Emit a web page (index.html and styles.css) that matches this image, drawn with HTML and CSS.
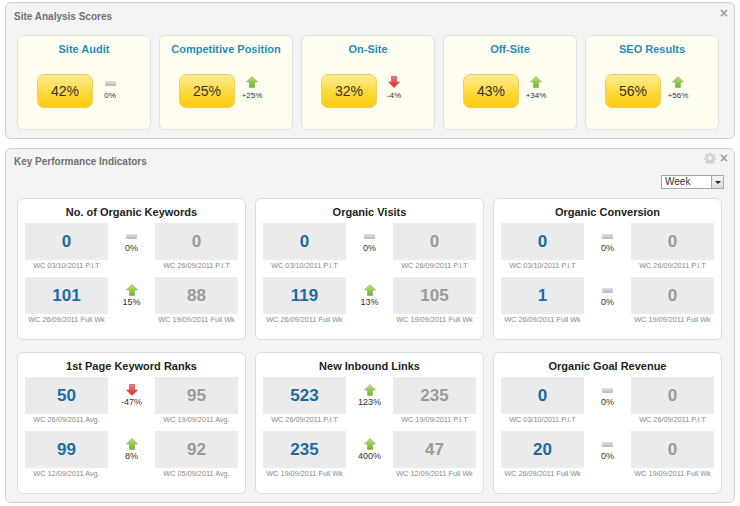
FILE: index.html
```html
<!DOCTYPE html>
<html>
<head>
    <title>Site Analysis Dashboard</title>
    <link rel="stylesheet" href="styles.css">
</head>
<body>
    <svg width="0" height="0" class="defs">
        <defs>
            <linearGradient id="gUp" x1="0" y1="0" x2="0" y2="1">
                <stop offset="0" stop-color="#b9e27a"/>
                <stop offset="1" stop-color="#6fb22c"/>
            </linearGradient>
            <linearGradient id="gDown" x1="0" y1="0" x2="0" y2="1">
                <stop offset="0" stop-color="#f47c7c"/>
                <stop offset="1" stop-color="#d9262b"/>
            </linearGradient>
            <symbol id="up" viewBox="0 0 12 12">
                <path d="M6 0.5 L11.5 6 H8.5 V11.5 H3.5 V6 H0.5 Z" fill="url(#gUp)" stroke="#7cb342" stroke-width="0.6"/>
            </symbol>
            <symbol id="down" viewBox="0 0 12 12">
                <path d="M6 11.5 L11.5 6 H8.5 V0.5 H3.5 V6 H0.5 Z" fill="url(#gDown)" stroke="#d33" stroke-width="0.6"/>
            </symbol>
        </defs>
    </svg>

    <div class="panel">
        <div class="panel-head">
            <span class="panel-title">Site Analysis Scores</span>
            <span class="tools"><span class="close">&#215;</span></span>
        </div>
        <div class="scores">
            <div class="score-card">
                <h3>Site Audit</h3>
                <div class="score-row">
                    <div class="badge">42%</div>
                    <div class="change"><span class="flat"></span><span>0%</span></div>
                </div>
            </div>
            <div class="score-card">
                <h3>Competitive Position</h3>
                <div class="score-row">
                    <div class="badge">25%</div>
                    <div class="change"><svg class="arrow"><use href="#up"/></svg><span>+25%</span></div>
                </div>
            </div>
            <div class="score-card">
                <h3>On-Site</h3>
                <div class="score-row">
                    <div class="badge">32%</div>
                    <div class="change"><svg class="arrow"><use href="#down"/></svg><span>-4%</span></div>
                </div>
            </div>
            <div class="score-card">
                <h3>Off-Site</h3>
                <div class="score-row">
                    <div class="badge">43%</div>
                    <div class="change"><svg class="arrow"><use href="#up"/></svg><span>+34%</span></div>
                </div>
            </div>
            <div class="score-card">
                <h3>SEO Results</h3>
                <div class="score-row">
                    <div class="badge">56%</div>
                    <div class="change"><svg class="arrow"><use href="#up"/></svg><span>+56%</span></div>
                </div>
            </div>
        </div>
    </div>

    <div class="panel kpi-panel">
        <div class="panel-head kpi-head">
            <span class="panel-title">Key Performance Indicators</span>
            <span class="tools">
                <svg class="gear" viewBox="0 0 12 12">
                    <path d="M5 0.5h2l0.3 1.5 1.1 0.5 1.3-0.9 1.4 1.4-0.9 1.3 0.5 1.1 1.5 0.3v2l-1.5 0.3-0.5 1.1 0.9 1.3-1.4 1.4-1.3-0.9-1.1 0.5-0.3 1.5h-2l-0.3-1.5-1.1-0.5-1.3 0.9-1.4-1.4 0.9-1.3-0.5-1.1-1.5-0.3v-2l1.5-0.3 0.5-1.1-0.9-1.3 1.4-1.4 1.3 0.9 1.1-0.5z M6 4a2 2 0 1 0 0.01 0z" fill="#d4d4d4" fill-rule="evenodd"/>
                </svg>
                <span class="close">&#215;</span>
            </span>
        </div>
        <div class="kpi-toolbar">
            <div class="select"><span>Week</span><span class="select-btn"><i></i></span></div>
        </div>
        <div class="kpis">
            <div class="kpi-card">
                <h3>No. of Organic Keywords</h3>
                <div class="kpi-grid">
                    <div class="cell"><div class="val">0</div><div class="lbl">WC 03/10/2011 P.I.T</div></div>
                    <div class="change"><span class="flat"></span><span>0%</span></div>
                    <div class="cell"><div class="val old">0</div><div class="lbl">WC 26/09/2011 P.I.T</div></div>
                    <div class="cell"><div class="val">101</div><div class="lbl">WC 26/09/2011 Full Wk</div></div>
                    <div class="change"><svg class="arrow"><use href="#up"/></svg><span>15%</span></div>
                    <div class="cell"><div class="val old">88</div><div class="lbl">WC 19/09/2011 Full Wk</div></div>
                </div>
            </div>
            <div class="kpi-card">
                <h3>Organic Visits</h3>
                <div class="kpi-grid">
                    <div class="cell"><div class="val">0</div><div class="lbl">WC 03/10/2011 P.I.T</div></div>
                    <div class="change"><span class="flat"></span><span>0%</span></div>
                    <div class="cell"><div class="val old">0</div><div class="lbl">WC 26/09/2011 P.I.T</div></div>
                    <div class="cell"><div class="val">119</div><div class="lbl">WC 26/09/2011 Full Wk</div></div>
                    <div class="change"><svg class="arrow"><use href="#up"/></svg><span>13%</span></div>
                    <div class="cell"><div class="val old">105</div><div class="lbl">WC 19/09/2011 Full Wk</div></div>
                </div>
            </div>
            <div class="kpi-card">
                <h3>Organic Conversion</h3>
                <div class="kpi-grid">
                    <div class="cell"><div class="val">0</div><div class="lbl">WC 03/10/2011 P.I.T</div></div>
                    <div class="change"><span class="flat"></span><span>0%</span></div>
                    <div class="cell"><div class="val old">0</div><div class="lbl">WC 26/09/2011 P.I.T</div></div>
                    <div class="cell"><div class="val">1</div><div class="lbl">WC 26/09/2011 Full Wk</div></div>
                    <div class="change"><span class="flat"></span><span>0%</span></div>
                    <div class="cell"><div class="val old">0</div><div class="lbl">WC 19/09/2011 Full Wk</div></div>
                </div>
            </div>
            <div class="kpi-card">
                <h3>1st Page Keyword Ranks</h3>
                <div class="kpi-grid">
                    <div class="cell"><div class="val">50</div><div class="lbl">WC 26/09/2011 Avg.</div></div>
                    <div class="change"><svg class="arrow"><use href="#down"/></svg><span>-47%</span></div>
                    <div class="cell"><div class="val old">95</div><div class="lbl">WC 19/09/2011 Avg.</div></div>
                    <div class="cell"><div class="val">99</div><div class="lbl">WC 12/09/2011 Avg.</div></div>
                    <div class="change"><svg class="arrow"><use href="#up"/></svg><span>8%</span></div>
                    <div class="cell"><div class="val old">92</div><div class="lbl">WC 05/09/2011 Avg.</div></div>
                </div>
            </div>
            <div class="kpi-card">
                <h3>New Inbound Links</h3>
                <div class="kpi-grid">
                    <div class="cell"><div class="val">523</div><div class="lbl">WC 26/09/2011 P.I.T</div></div>
                    <div class="change"><svg class="arrow"><use href="#up"/></svg><span>123%</span></div>
                    <div class="cell"><div class="val old">235</div><div class="lbl">WC 19/09/2011 P.I.T</div></div>
                    <div class="cell"><div class="val">235</div><div class="lbl">WC 19/09/2011 Full Wk</div></div>
                    <div class="change"><svg class="arrow"><use href="#up"/></svg><span>400%</span></div>
                    <div class="cell"><div class="val old">47</div><div class="lbl">WC 12/09/2011 Full Wk</div></div>
                </div>
            </div>
            <div class="kpi-card">
                <h3>Organic Goal Revenue</h3>
                <div class="kpi-grid">
                    <div class="cell"><div class="val">0</div><div class="lbl">WC 03/10/2011 P.I.T</div></div>
                    <div class="change"><span class="flat"></span><span>0%</span></div>
                    <div class="cell"><div class="val old">0</div><div class="lbl">WC 26/09/2011 P.I.T</div></div>
                    <div class="cell"><div class="val">20</div><div class="lbl">WC 26/09/2011 Full Wk</div></div>
                    <div class="change"><span class="flat"></span><span>0%</span></div>
                    <div class="cell"><div class="val old">0</div><div class="lbl">WC 19/09/2011 Full Wk</div></div>
                </div>
            </div>
        </div>
    </div>
</body>
</html>
```

FILE: styles.css
```css
body {
    margin: 0;
    padding: 2px 5px 0;
    background: #fff;
    font-family: "Liberation Sans", Arial, sans-serif;
    color: #333;
}
.defs {
    position: absolute;
}
.panel {
    background: #f4f4f4;
    border: 1px solid #cfcfcf;
    border-radius: 6px;
}
.kpi-panel {
    margin-top: 9px;
}
.panel-head {
    display: flex;
    justify-content: space-between;
    height: 32px;
    padding: 6px 6px 0 8px;
    box-sizing: border-box;
}
.kpi-head {
    height: 20px;
    padding-top: 5px;
}
.panel-title {
    font-size: 10px;
    line-height: 15px;
    font-weight: bold;
    color: #707070;
}
.tools {
    display: flex;
    align-items: flex-start;
    gap: 4px;
    margin-top: -3px;
}
.close {
    font-size: 14px;
    line-height: 14px;
    font-weight: bold;
    color: #a0a0a0;
}
.gear {
    width: 12px;
    height: 12px;
    margin-top: 1px;
}

/* score cards */
.scores {
    display: grid;
    grid-template-columns: repeat(5, 134px);
    gap: 8px;
    padding: 0 15px 8px 11px;
}
.score-card {
    height: 95px;
    box-sizing: border-box;
    background: #fffdf0;
    border: 1px solid #e2e2dc;
    border-radius: 6px;
    padding-top: 5px;
}
.score-card h3 {
    margin: 0;
    text-align: center;
    font-size: 11px;
    line-height: 16px;
    color: #1f8dc1;
}
.score-row {
    display: flex;
    align-items: center;
    margin-top: 17px;
    padding-left: 19px;
}
.badge {
    width: 56px;
    height: 34px;
    box-sizing: border-box;
    border: 1px solid #f4cd55;
    border-radius: 7px;
    background: linear-gradient(#ffec94, #ffd83a 55%, #ffcb10);
    text-align: center;
    font-size: 14px;
    line-height: 32px;
    color: #333;
}
.score-row .change {
    width: 30px;
    margin-left: 2px;
    margin-top: -5px;
    font-size: 8px;
}
.score-row .arrow {
    margin-bottom: 2px;
}
.change {
    display: flex;
    flex-direction: column;
    align-items: center;
    font-size: 9px;
    line-height: 11px;
    color: #333;
}
.arrow {
    width: 12px;
    height: 12px;
    margin-bottom: 1px;
}
.flat {
    display: block;
    width: 11px;
    height: 5px;
    margin: 4px 0 4px;
    border-radius: 1px;
    background: linear-gradient(#e2e2e2, #b8b8b8);
}

/* kpi section */
.kpi-toolbar {
    display: flex;
    justify-content: flex-end;
    padding: 6px 10px 9px 0;
}
.select {
    display: flex;
    width: 63px;
    height: 14px;
    box-sizing: border-box;
    border: 1px solid #a8a8a8;
    background: #fff;
    font-size: 10px;
    line-height: 12px;
}
.select span:first-child {
    flex: 1;
    padding-left: 3px;
}
.select-btn {
    width: 11px;
    border-left: 1px solid #a8a8a8;
    background: linear-gradient(#f6f6f6, #dcdcdc);
    display: flex;
    align-items: center;
    justify-content: center;
}
.select-btn i {
    border-left: 3px solid transparent;
    border-right: 3px solid transparent;
    border-top: 3px solid #222;
}
.kpis {
    display: grid;
    grid-template-columns: repeat(3, 229px);
    column-gap: 9px;
    row-gap: 12px;
    padding: 0 12px 8px 11px;
}
.kpi-card {
    height: 142px;
    box-sizing: border-box;
    background: #fff;
    border: 1px solid #dcdcdc;
    border-radius: 6px;
    padding: 4px 7px 0;
}
.kpi-card h3 {
    margin: 0 0 2px;
    text-align: center;
    font-size: 11px;
    line-height: 18px;
    color: #222;
}
.kpi-grid {
    display: grid;
    grid-template-columns: 83px 1fr 83px;
    grid-auto-rows: 49px;
    row-gap: 5px;
}
.kpi-grid .change {
    padding-top: 7px;
}
.val {
    height: 37px;
    background: #ebebeb;
    text-align: center;
    font-size: 17px;
    line-height: 37px;
    font-weight: bold;
    color: #1b6ba6;
}
.val.old {
    color: #9a9a9a;
}
.lbl {
    text-align: center;
    font-size: 7.3px;
    line-height: 12px;
    color: #888;
    white-space: nowrap;
}
```
